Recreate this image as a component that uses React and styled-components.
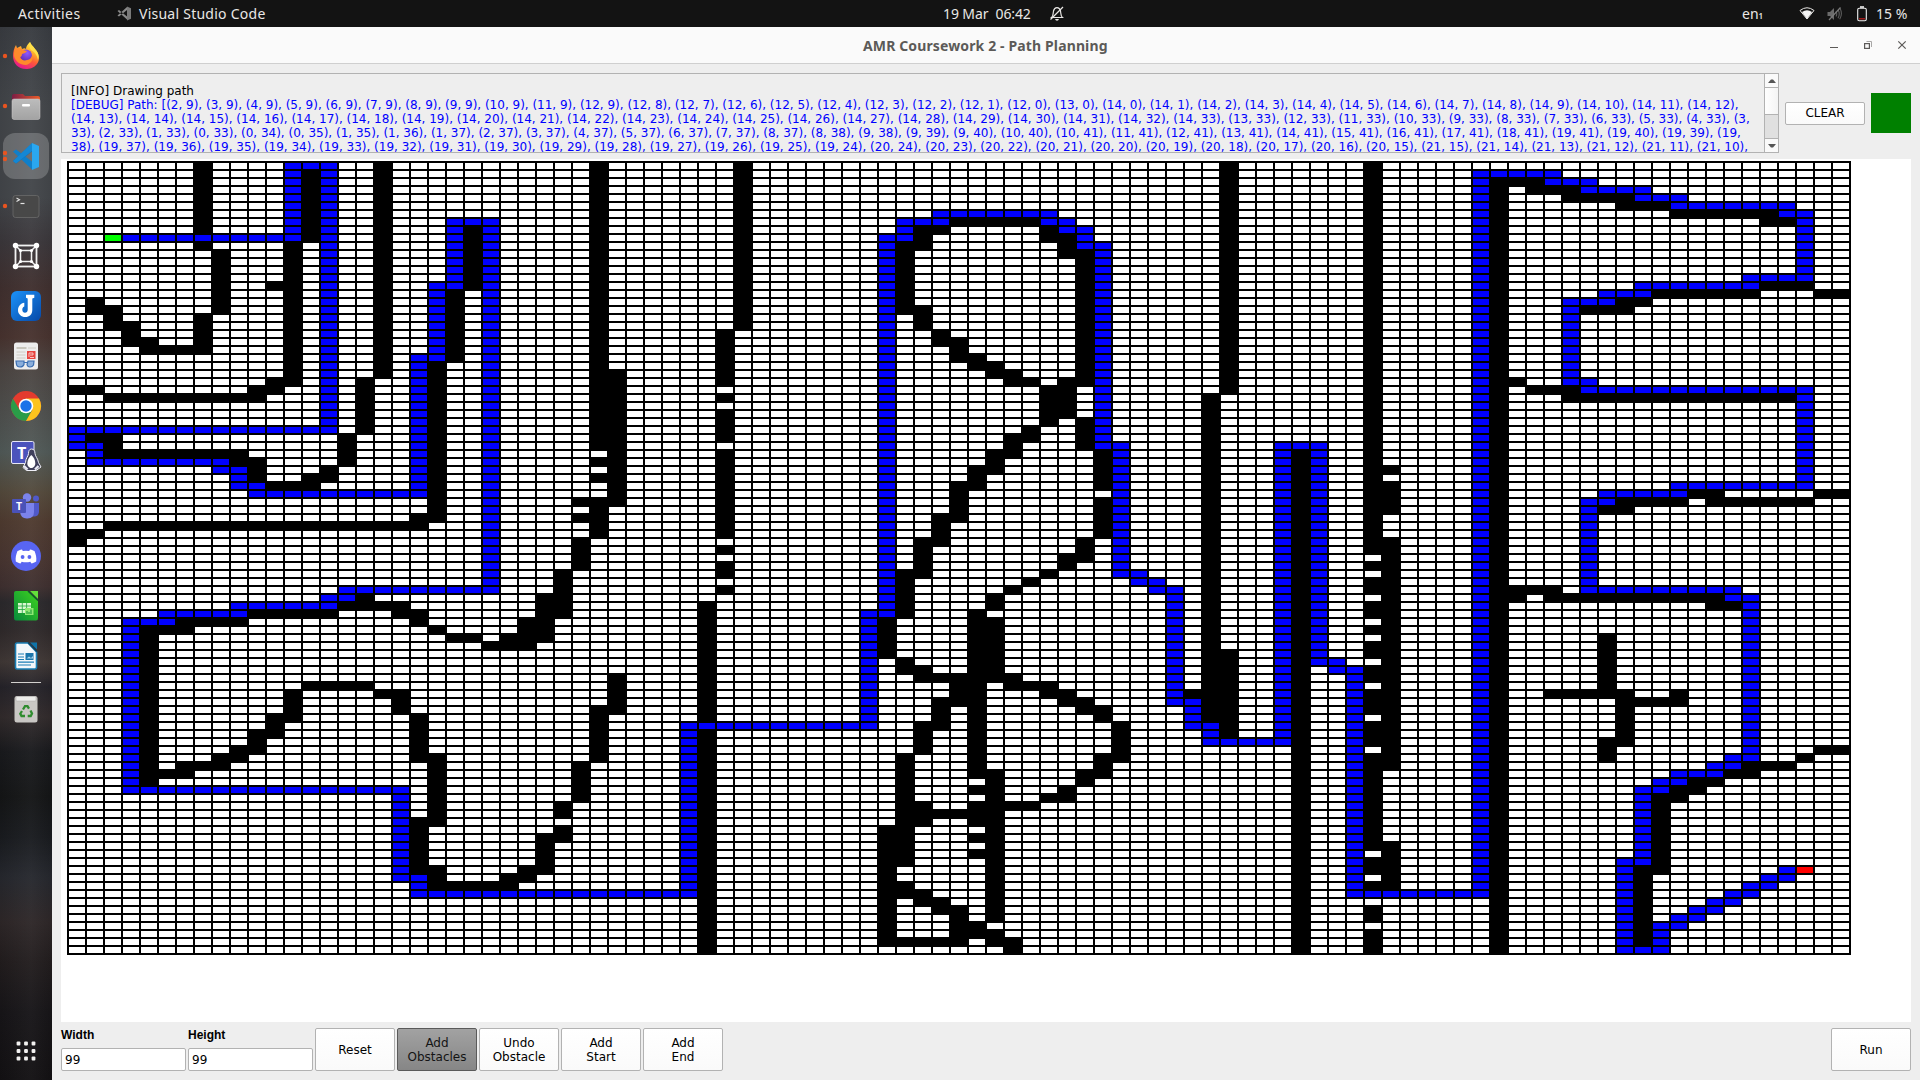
import React from "react";
import styled, { createGlobalStyle } from "styled-components";

const GlobalStyle = createGlobalStyle`
  * { box-sizing: border-box; }
  html, body { margin: 0; padding: 0; background: #131313; }
  body { width: 1920px; height: 1080px; overflow: hidden; }
`;

const uiFont = `"Noto Sans", "Open Sans", sans-serif`;
const appFont = `"DejaVu Sans", sans-serif`;

/* ---------- grid data ---------- */

const COLS = 99;
const ROWS = 99;

const WAYPOINTS = [
  [2, 9], [12, 9], [12, 0], [14, 0], [14, 33], [0, 33], [0, 35], [1, 35], [1, 37], [8, 37], [8, 38],
  [9, 38], [9, 40], [10, 40], [10, 41], [19, 41], [19, 24], [20, 24], [20, 15], [21, 15], [21, 7],
  [23, 7], [23, 53], [15, 53], [15, 54], [14, 54], [14, 55], [9, 55], [9, 56], [5, 56], [5, 57],
  [3, 57], [3, 78], [18, 78], [18, 89], [19, 89], [19, 91], [34, 91], [34, 70], [44, 70], [44, 56],
  [45, 56], [45, 9], [46, 9], [46, 7], [48, 7], [48, 6], [54, 6], [54, 7], [55, 7], [55, 8], [56, 8],
  [56, 10], [57, 10], [57, 35], [58, 35], [58, 51], [59, 51], [59, 52], [60, 52], [60, 53], [61, 53],
  [61, 67], [62, 67], [62, 70], [63, 70], [63, 72], [67, 72], [67, 35], [69, 35], [69, 62], [70, 62],
  [70, 63], [71, 63], [71, 91], [78, 91], [78, 1], [82, 1], [82, 2], [84, 2], [84, 3], [87, 3],
  [87, 4], [89, 4], [89, 5], [95, 5], [95, 6], [96, 6], [96, 14], [93, 14], [93, 15], [87, 15],
  [87, 16], [85, 16], [85, 17], [83, 17], [83, 27], [84, 27], [84, 28], [96, 28], [96, 40], [89, 40],
  [89, 41], [85, 41], [85, 42], [84, 42], [84, 53], [92, 53], [92, 54], [93, 54], [93, 74], [92, 74],
  [92, 75], [91, 75], [91, 76], [89, 76], [89, 77], [88, 77], [88, 78], [87, 78], [87, 87], [86, 87],
  [86, 98], [88, 98], [88, 95], [89, 95], [89, 94], [90, 94], [90, 93], [91, 93], [91, 92], [92, 92],
  [92, 91], [93, 91], [93, 90], [94, 90], [94, 89], [95, 89], [95, 88], [96, 88],
];

/* column: list of [first row, last row] */
const WALLS = {
  0: [[28, 28], [46, 47]],
  1: [[17, 18], [28, 28], [34, 34], [46, 46]],
  2: [[18, 20], [29, 29], [34, 36], [45, 45]],
  3: [[20, 22], [29, 29], [36, 36], [45, 45]],
  4: [[22, 23], [29, 29], [36, 36], [45, 45], [58, 77]],
  5: [[23, 23], [29, 29], [36, 36], [45, 45], [58, 58], [76, 76]],
  6: [[23, 23], [29, 29], [36, 36], [45, 45], [57, 58], [75, 76]],
  7: [[0, 10], [19, 23], [29, 29], [36, 36], [45, 45], [57, 57], [75, 75]],
  8: [[11, 18], [29, 29], [36, 36], [45, 45], [57, 57], [74, 75]],
  9: [[29, 29], [36, 37], [45, 45], [57, 57], [73, 74]],
  10: [[28, 29], [37, 39], [45, 45], [56, 56], [71, 73]],
  11: [[15, 15], [27, 28], [40, 40], [45, 45], [56, 56], [69, 71]],
  12: [[10, 27], [40, 40], [45, 45], [56, 56], [66, 69]],
  13: [[1, 9], [39, 40], [45, 45], [56, 56], [65, 65]],
  14: [[38, 39], [45, 45], [56, 56], [65, 65]],
  15: [[34, 37], [45, 45], [55, 55], [65, 65]],
  16: [[27, 33], [45, 45], [54, 55], [65, 65]],
  17: [[0, 26], [45, 45], [55, 55], [66, 66]],
  18: [[45, 45], [55, 56], [66, 68]],
  19: [[44, 45], [56, 57], [69, 74], [82, 88]],
  20: [[25, 44], [58, 58], [74, 82], [88, 90]],
  21: [[16, 24], [59, 59], [90, 90]],
  22: [[8, 15], [59, 59], [90, 90]],
  23: [[60, 60], [90, 90]],
  24: [[59, 60], [89, 90]],
  25: [[57, 60], [88, 89]],
  26: [[54, 59], [84, 88]],
  27: [[51, 56], [80, 81], [83, 84]],
  28: [[42, 42], [44, 44], [47, 50], [75, 79]],
  29: [[0, 35], [37, 37], [39, 39], [42, 46], [68, 74]],
  30: [[26, 42], [64, 68]],
  35: [[55, 98]],
  36: [[21, 27], [29, 29], [31, 34], [36, 46], [48, 48], [50, 51], [53, 53]],
  37: [[0, 20]],
  45: [[57, 61], [83, 97]],
  46: [[10, 18], [51, 56], [62, 63], [74, 87], [90, 91], [97, 97]],
  47: [[8, 10], [18, 20], [47, 51], [63, 64], [70, 73], [80, 82], [91, 92], [97, 97]],
  48: [[8, 8], [21, 22], [44, 47], [64, 64], [67, 70], [81, 81], [92, 93], [97, 97]],
  49: [[7, 7], [22, 24], [40, 44], [64, 67], [81, 81], [93, 97]],
  50: [[7, 7], [24, 25], [38, 40], [56, 76], [78, 78], [80, 82], [84, 84], [86, 86], [95, 96]],
  51: [[7, 7], [25, 26], [36, 38], [54, 55], [57, 64], [76, 94], [96, 97]],
  52: [[7, 7], [26, 27], [34, 36], [53, 53], [64, 65], [80, 80], [97, 98]],
  53: [[7, 7], [27, 27], [33, 34], [52, 52], [65, 65], [80, 80]],
  54: [[8, 9], [28, 32], [51, 51], [65, 66], [79, 79]],
  55: [[9, 11], [27, 31], [49, 50], [66, 67], [78, 79]],
  56: [[11, 27], [32, 35], [47, 49], [67, 68], [76, 77]],
  57: [[36, 40], [42, 46], [68, 69], [74, 76]],
  58: [[70, 74]],
  62: [[66, 66]],
  63: [[29, 69]],
  64: [[0, 28], [61, 71]],
  68: [[36, 98]],
  72: [[0, 48], [50, 50], [52, 53], [55, 56], [58, 58], [60, 61], [63, 64], [66, 68], [70, 72],
    [74, 85], [87, 88], [90, 90], [93, 94], [96, 98]],
  73: [[38, 38], [40, 43], [47, 75], [85, 90]],
  79: [[2, 98]],
  80: [[2, 2], [27, 27], [53, 54]],
  81: [[2, 3], [28, 28], [53, 53]],
  82: [[3, 3], [28, 28], [53, 54], [66, 66]],
  83: [[3, 4], [28, 29], [54, 54], [66, 66]],
  84: [[4, 4], [18, 18], [29, 29], [54, 54], [66, 66]],
  85: [[4, 4], [18, 18], [29, 29], [43, 43], [54, 54], [59, 66], [72, 74]],
  86: [[4, 5], [17, 18], [29, 29], [42, 43], [54, 54], [66, 72]],
  87: [[5, 5], [17, 17], [29, 29], [42, 42], [54, 54], [67, 67], [88, 97]],
  88: [[5, 5], [16, 16], [29, 29], [42, 42], [54, 54], [67, 67], [79, 88]],
  89: [[6, 6], [16, 16], [29, 29], [42, 42], [54, 54], [66, 67], [78, 79]],
  90: [[6, 6], [16, 16], [29, 29], [41, 41], [54, 54], [77, 78]],
  91: [[6, 6], [16, 16], [29, 29], [41, 42], [54, 55], [77, 77]],
  92: [[6, 6], [16, 16], [29, 29], [42, 42], [55, 55], [76, 76]],
  93: [[6, 6], [16, 16], [29, 29], [42, 42], [75, 76]],
  94: [[6, 7], [15, 15], [29, 29], [42, 42], [75, 75]],
  95: [[7, 7], [15, 15], [29, 29], [42, 42], [75, 75]],
  96: [[15, 15], [42, 42], [74, 74]],
  97: [[16, 16], [41, 41], [73, 73]],
  98: [[16, 16], [41, 41], [73, 73]],
};

function expandPath(points) {
  const out = [points[0]];
  for (let i = 1; i < points.length; i += 1) {
    let [x, y] = points[i - 1];
    const [tx, ty] = points[i];
    while (x !== tx || y !== ty) {
      x += Math.sign(tx - x);
      y += Math.sign(ty - y);
      out.push([x, y]);
    }
  }
  return out;
}

const PATH = expandPath(WAYPOINTS);
const LOG_PATH = PATH.slice(0, PATH.findIndex(([x, y]) => x === 21 && y === 10) + 1);

const COLOURS = { free: "#ffffff", path: "#0000ff", start: "#00ff00", end: "#ff0000" };
const key = (x, y) => y * COLS + x;

const MARKED = (() => {
  const m = new Map();
  PATH.forEach(([x, y]) => m.set(key(x, y), "path"));
  m.set(key(...PATH[0]), "start");
  m.set(key(...PATH[PATH.length - 1]), "end");
  return m;
})();

/* ---------- styled parts ---------- */

const Desktop = styled.div`
  width: 1920px;
  height: 1080px;
  display: flex;
  flex-direction: column;
  overflow: hidden;
`;

const TopBar = styled.header`
  flex: 0 0 27px;
  display: flex;
  align-items: center;
  background: #131313;
  color: #e9e7e5;
  font: 14px/27px ${uiFont};
  white-space: pre;
`;

const TopSlot = styled.div`
  width: ${(p) => p.$w}px;
  padding-left: ${(p) => p.$pad || 0}px;
  letter-spacing: ${(p) => p.$ls || 0}px;
  height: 27px;
  display: flex;
  align-items: center;
  flex: none;
`;

const Tiny = styled.span`
  font-size: 8px;
  font-weight: 600;
  padding-top: 4px;
`;

const Main = styled.div`
  flex: 1;
  display: flex;
  min-height: 0;
`;

const Dock = styled.nav`
  flex: 0 0 52px;
  display: flex;
  flex-direction: column;
  padding-top: 3px;
  background:
    linear-gradient(90deg, rgba(0, 0, 0, 0.06), rgba(255, 255, 255, 0.03) 60%, rgba(0, 0, 0, 0.05)),
    linear-gradient(180deg, #393c41 0, #43464a 80px, #43464a 170px, #3b373b 215px, #40302f 260px,
      #48332f 310px, #4c4542 340px, #4f504e 385px, #515a58 425px, #544a3c 465px, #4f3b30 495px,
      #483531 535px, #3f3030 560px, #2b292c 575px, #302a2b 605px, #403836 635px, #252329 660px,
      #322b2c 690px, #191a1d 725px, #141516 770px, #191b1f 810px, #26282e 850px, #2e2728 895px,
      #221d1e 935px, #171518 985px, #131113 1053px);
`;

const DockItem = styled.div`
  flex: 0 0 50px;
  svg { display: block; }
`;

const DockRule = styled.hr`
  flex: 0 0 1px;
  width: 30px;
  margin: 2px 11px 1px;
  border: 0;
  background: #d2d0ce;
`;

const DockFooter = styled.div`
  margin-top: auto;
  height: 58px;
  svg { display: block; }
`;

const Window = styled.section`
  flex: 1;
  min-width: 0;
  display: flex;
  flex-direction: column;
  background: #eeeeee;
`;

const TitleBar = styled.div`
  flex: 0 0 37px;
  display: flex;
  align-items: center;
  background: #fafafa;
  border-bottom: 1px solid #cfcfcf;
`;

const Title = styled.h1`
  margin: 0 0 0 811px;
  padding-top: 1px;
  width: 967px;
  font: 700 14px/35px ${uiFont};
  letter-spacing: 0.13px;
  color: #5c5a58;
  white-space: nowrap;
`;

const Body = styled.div`
  flex: 1;
  display: flex;
  flex-direction: column;
  padding: 9px 9px 0;
`;

const LogRow = styled.div`
  flex: 0 0 80px;
  display: flex;
  align-items: center;
  margin-bottom: 6px;
`;

const LogFrame = styled.div`
  width: 1718px;
  height: 80px;
  display: flex;
  border: 1px solid #b2b2b2;
`;

const LogText = styled.div`
  width: 1702px;
  height: 78px;
  overflow: hidden;
  padding: 10px 8px 0 9px;
  font: 12px/14px ${appFont};
  letter-spacing: -0.005px;
  color: #0000ff;
`;

const LogLine = styled.div`
  color: ${(p) => (p.$info ? "#000000" : "#0000ff")};
`;

const Scroll = styled.div`
  width: 14px;
  display: flex;
  flex-direction: column;
  border-left: 1px solid #b2b2b2;
  background: #e0e0e0;
`;

const ScrollEnd = styled.div`
  height: 14px;
  display: flex;
  align-items: center;
  justify-content: center;
  background: #fafafa;
  border-${(p) => (p.$down ? "top" : "bottom")}: 1px solid #b2b2b2;
  margin-top: ${(p) => (p.$down ? "auto" : "0")};
`;

const Thumb = styled.div`
  height: 27px;
  background: linear-gradient(90deg, #ffffff, #f4f4f4);
  border-bottom: 1px solid #b2b2b2;
`;

const Button = styled.button`
  width: 80px;
  height: ${(p) => (p.$short ? 23 : 43)}px;
  padding: 0;
  border: 1px solid ${(p) => (p.$active ? "#5a5a5a" : "#b2b2b2")};
  border-radius: 2px;
  background: ${(p) =>
    p.$active ? "linear-gradient(#a2a2a2, #868686)" : "linear-gradient(#ffffff, #fafafa)"};
  color: ${(p) => (p.$active ? "#141414" : "#000000")};
  font: 12px/14px ${appFont};
  white-space: pre-line;
  text-align: center;
`;

const ClearSlot = styled.div`
  margin: 0 6px;
  display: flex;
`;

const Status = styled.div`
  width: 40px;
  height: 40px;
  background: #008000;
`;

const Canvas = styled.div`
  flex: 0 0 863px;
  padding: 2px 6px;
  background: #ffffff;
`;

const Grid = styled.div`
  width: 1784px;
  display: grid;
  grid-template-columns: repeat(${COLS}, 16px);
  grid-auto-rows: 6px;
  gap: 2px;
  padding: 2px;
  background: #000000;
`;

const Cell = styled.i`
  background: ${(p) => COLOURS[p.$kind]};
  grid-column: ${(p) => p.$col};
`;

const Controls = styled.footer`
  display: flex;
  gap: 2px;
  padding-top: 6px;
`;

const Field = styled.label`
  width: 125px;
  display: flex;
  flex-direction: column;
  font: 700 12px/14px "Liberation Sans", sans-serif;
  color: #000000;
`;

const Input = styled.input`
  width: 125px;
  height: 23px;
  margin-top: 6px;
  padding: 0 3px;
  border: 1px solid #b2b2b2;
  border-radius: 2px;
  background: #ffffff;
  color: #000000;
  font: 12px ${appFont};
`;

const RunSlot = styled.div`
  margin-left: auto;
`;

/* ---------- grid ---------- */

const wallSet = new Set();
Object.entries(WALLS).forEach(([c, runs]) =>
  runs.forEach(([a, b]) => {
    for (let r = a; r <= b; r += 1) wallSet.add(key(Number(c), r));
  })
);

const Board = React.memo(function Board() {
  const cells = [];
  for (let r = 0; r < ROWS; r += 1) {
    for (let c = 0; c < COLS; c += 1) {
      const k = key(c, r);
      const kind = MARKED.get(k) || (wallSet.has(k) ? null : "free");
      if (kind || c === 0) {
        cells.push(<Cell key={k} $kind={kind} $col={c + 1} />);
      }
    }
  }
  return <Grid>{cells}</Grid>;
});

/* ---------- dock icons ---------- */

const Icon = ({ children, h = 50 }) => (
  <svg width="52" height={h} viewBox={`0 0 52 ${h}`}>{children}</svg>
);
const Dot = ({ y = 26 }) => <circle cx="5" cy={y} r="2.2" fill="#e95420" />;

const Firefox = () => (
  <Icon>
    <defs>
      <linearGradient id="ff1" x1="0.8" y1="0.05" x2="0.35" y2="1">
        <stop offset="0" stopColor="#fff44f" />
        <stop offset="0.3" stopColor="#ffb52a" />
        <stop offset="0.6" stopColor="#ff5a36" />
        <stop offset="1" stopColor="#e5178f" />
      </linearGradient>
      <radialGradient id="ff2" cx="0.6" cy="0.3" r="0.8">
        <stop offset="0" stopColor="#9059ff" />
        <stop offset="1" stopColor="#5b2aa8" />
      </radialGradient>
    </defs>
    <Dot />
    <path d="M30 12c1 3 3 4 5 7 5 5 5 11 2 15-3 4-7 5-11 5-8 0-13-6-13-13 0-4 1-8 3-11l1 3 4-2 1 3c2-1 3-1 4 0 0-3 2-5 4-7z" fill="url(#ff1)" />
    <circle cx="26" cy="25.5" r="6" fill="url(#ff2)" />
    <path d="M15 19c3-1 6-1 8 1l4 1c-1 2-3 2-5 3 0 2-1 3-2 3 1 3 4 4 7 3 3 0 5-3 5-5 2 4-1 9-6 10-6 0-11-4-12-9 0-3 0-5 1-7z" fill="#ff8a2b" />
    <path d="M30 12c1 3 3 4 5 7 4 4 4 8 3 11-1-5-3-8-7-10-2-2-2-5-1-8z" fill="#ffe04a" />
  </Icon>
);

const Files = () => (
  <Icon>
    <Dot />
    <defs>
      <linearGradient id="fi1" x1="0" x2="1"><stop offset="0" stopColor="#7c1d45" /><stop offset="1" stopColor="#ea5b28" /></linearGradient>
      <linearGradient id="fi2" x1="0" x2="0" y1="0" y2="1"><stop offset="0" stopColor="#bcbcbc" /><stop offset="1" stopColor="#a3a3a3" /></linearGradient>
    </defs>
    <path d="M14 14h9l2 2h13q2 0 2 2v6H12v-8q0-2 2-2z" fill="url(#fi1)" />
    <path d="M14 19h24q2 0 2 2v16q0 2.500-2 2.500H14q-2 0-2-2.500V21q0-2 2-2z" fill="url(#fi2)" stroke="#d0cfce" strokeWidth="0.5" />
    <rect x="22" y="24" width="8" height="2.500" rx="1" fill="#fff" />
  </Icon>
);

const Code = () => (
  <Icon>
    <rect x="3" y="3" width="46" height="46" rx="12" fill="#ffffff" fillOpacity="0.2" />
    <Dot y={23} />
    <Dot y={29} />
    <path d="M13 21.500l3-2 20 15-4 5z" fill="#0f7fca" />
    <path d="M13 31l3 2.500 20-15-4-5z" fill="#0a6fb8" />
    <path d="M32 13l7 3v21l-7 3z" fill="#2aa7f0" />
    <path d="M13 31l3 2.500 16-12.500v-8z" fill="#1487d4" />
  </Icon>
);

const Terminal = () => (
  <Icon>
    <Dot />
    <rect x="13" y="15.500" width="26" height="22" rx="2.500" fill="#484848" stroke="#6b6b6b" strokeWidth="0.800" />
    <path d="M16.500 18l3 1.700-3 1.700" fill="none" stroke="#e4e4e4" strokeWidth="1.100" />
    <path d="M20.500 23.500h4" stroke="#e4e4e4" strokeWidth="1.200" />
  </Icon>
);

const Boxes = () => (
  <Icon>
    <g fill="none" stroke="#f2f2f2" strokeWidth="1.500">
      <rect x="15.500" y="15.500" width="21" height="21" strokeWidth="1.800" />
      <rect x="20.500" y="20.500" width="11" height="11" />
      <path d="M15.500 15.500l5 5M36.500 15.500l-5 5M15.500 36.500l5-5M36.500 36.500l-5-5" />
    </g>
    <g fill="#fff">
      <circle cx="15.500" cy="15.500" r="2.700" /><circle cx="36.500" cy="15.500" r="2.700" />
      <circle cx="15.500" cy="36.500" r="2.700" /><circle cx="36.500" cy="36.500" r="2.700" />
      <circle cx="20.500" cy="20.500" r="1.600" /><circle cx="31.500" cy="20.500" r="1.600" />
      <circle cx="20.500" cy="31.500" r="1.600" /><circle cx="31.500" cy="31.500" r="1.600" />
    </g>
  </Icon>
);

const Joplin = () => (
  <Icon>
    <defs><linearGradient id="jp" x1="0" y1="0" x2="1" y2="1"><stop offset="0" stopColor="#1c92f8" /><stop offset="1" stopColor="#0749a8" /></linearGradient></defs>
    <rect x="11" y="11" width="30" height="30" rx="6" fill="url(#jp)" />
    <path d="M26 14.800h8.300v3l-2 .7V30c0 4.500-3 7-7 7s-7.300-3-7.300-6.800 2.700-7 6.300-7.500v3.700c-1.700.6-2 2-2 3.300 0 1.800 1.200 3 2.700 3s2.700-1.200 2.700-3V18.500l-1.700-.7z" fill="#fff" />
  </Icon>
);

const Reader = () => (
  <Icon>
    <rect x="14" y="12.500" width="24" height="27" rx="2.500" fill="#ededed" />
    <path d="M16.500 18h10" stroke="#c5c2b8" strokeWidth="1.800" />
    <path d="M16.500 22h9M16.500 25h9M16.500 28h9M28 18h8" stroke="#cfccc4" strokeWidth="1" />
    <rect x="27" y="21" width="8.500" height="8" fill="#e8443f" />
    <path d="M29 27v-4h4v2h-3M30 27.500h4" fill="none" stroke="#fbd0ce" strokeWidth="0.900" />
    <path d="M16 31h8v3.500q-1 2.500-4 2.500t-3.500-2.500zM28 31h6l-.5 4q-1 2-3.500 2t-3-2.500zM24 32.500h4" fill="#8aaedb" stroke="#3c6fb2" strokeWidth="1.200" />
  </Icon>
);

const Chrome = () => (
  <Icon>
    <circle cx="26" cy="26" r="15" fill="#e33b2e" />
    <path d="M13 18.500A15 15 0 0 0 26 41l6.500-11.300H19.500z" fill="#2a9c48" />
    <path d="M26 41A15 15 0 0 0 39 18.500H26l6.500 11.200z" fill="#fcc31e" />
    <circle cx="26" cy="26" r="7.300" fill="#fff" />
    <circle cx="26" cy="26" r="5.700" fill="#1b73e8" />
  </Icon>
);

const Tee = styled.text`
  font: 700 ${(p) => p.$size}px "Open Sans", sans-serif;
  fill: #ffffff;
`;

const TeamsLinux = () => (
  <Icon>
    <rect x="11.500" y="11.500" width="22.500" height="22" rx="1.500" fill="#4b53bc" stroke="#e6e6f6" strokeWidth="1" />
    <Tee x="17" y="28.500" $size="16">T</Tee>
    <path d="M31.500 19c2.500 0 3.500 2 3.500 4.500 0 2.500 3 5 3.500 9l2.500 4.500-5 3.500h-9.500l-3.500-3 2.500-5c0-4 3-6.500 3-9 0-2.500.8-4.500 3-4.500z" fill="#40405c" stroke="#f0f0f8" strokeWidth="1" />
    <path d="M31.300 25c2.500 2 4 5 4 8.500 0 2-1.500 4.500-4 4.500s-4-2.500-4-4.500c0-3.500 1.800-6.500 4-8.500z" fill="#fff" />
    <path d="M24 36l3.500 3.500M38.500 36l-3.500 3.500" stroke="#e8e8f2" strokeWidth="2.400" />
  </Icon>
);

const Teams = () => (
  <Icon>
    <circle cx="36" cy="18.500" r="3" fill="#5059c9" />
    <path d="M30 23h9v9q-.5 4-4 4.500h-4z" fill="#5059c9" />
    <circle cx="27" cy="17.500" r="4.200" fill="#7b83eb" />
    <path d="M20 23h14v9q0 6-6.500 6.500T20 32z" fill="#7b83eb" />
    <rect x="12" y="19" width="14" height="14" rx="1" fill="#4a52b8" />
    <Tee x="16" y="30" $size="10.500">T</Tee>
  </Icon>
);

const Discord = () => (
  <Icon>
    <circle cx="26" cy="26" r="15" fill="#5865f2" />
    <path d="M22 19.500c-2 .3-3.500 1-4.500 1.600-1.300 3-2.300 7-1.700 10.400 1.800 1.200 3.500 1.800 4.700 2l1.200-1.800q4.300 1.200 8.600 0l1.200 1.800c1.200-.2 3-.8 4.700-2 .6-3.400-.4-7.400-1.700-10.400-1-.6-2.500-1.300-4.500-1.600l-.8 1.500q-3.200-.5-6.400 0z" fill="#fff" />
    <circle cx="22.600" cy="27" r="1.900" fill="#5865f2" /><circle cx="29.400" cy="27" r="1.900" fill="#5865f2" />
  </Icon>
);

const Calc = () => (
  <Icon>
    <defs><linearGradient id="ca" x1="1" y1="0" x2="0" y2="1"><stop offset="0" stopColor="#3fd41e" /><stop offset="1" stopColor="#078a3c" /></linearGradient></defs>
    <path d="M16 11h12l10 10v17q0 2.500-2 2.500H16q-2 0-2-2.500V13q0-2 2-2z" fill="url(#ca)" />
    <path d="M30 11h8v8z" fill="#63e03a" />
    <path d="M28 11l10 9.500" stroke="#10602a" strokeWidth="1.500" />
    <rect x="18" y="23" width="13" height="10" fill="#d9f7cf" />
    <path d="M18 26h13M18 29.500h13M22.300 23v10M26.600 23v10" stroke="#1ea63d" strokeWidth="0.800" />
    <rect x="25" y="28" width="8.500" height="7" fill="#8fe873" />
    <path d="M27 34v-3M29 34v-2M31 34v-4.500" stroke="#1a9c3a" strokeWidth="1.100" />
  </Icon>
);

const Writer = () => (
  <Icon>
    <path d="M17 13h11l8.500 9v15q0 2-1.500 2H17q-1.500 0-1.500-2V15q0-2 1.500-2z" fill="#f3f7fa" stroke="#1a7fb5" strokeWidth="1.600" />
    <path d="M30 12.500h7v7z" fill="#0f74aa" />
    <path d="M28 12.500l9 9" stroke="#0d3f5c" strokeWidth="1.300" />
    <path d="M18 24h6M18 27h6M18 29.500h6M18 32.200h16M18 35h13" stroke="#1c7fb6" strokeWidth="1.200" />
    <rect x="25.500" y="23" width="8" height="7" fill="#1b75ab" />
    <path d="M26.500 28.500l2.500-2 2 1.500 2-2v2.500z" fill="#a7d3ea" />
  </Icon>
);

const Trash = () => (
  <Icon>
    <rect x="14.500" y="12" width="23" height="26.500" rx="2.500" fill="#c9c7c4" />
    <rect x="16" y="12.500" width="20" height="4.500" rx="1" fill="#ececea" stroke="#a9a7a4" strokeWidth="0.500" />
    <g fill="none" stroke="#2f8c2f" strokeWidth="2.300">
      <path d="M23 25.500l2-3.300h2.500l1.500 2.500" />
      <path d="M30.500 26.500l1.500 3-1.300 2.500h-3" />
      <path d="M25 32h-3.500l-1.200-2.300 1.700-2.700" />
    </g>
  </Icon>
);

const AppsGrid = () => (
  <Icon h={58}>
    {[21.5, 29, 36.5].map((y) => [18.5, 26, 33.5].map((x) => (
      <rect key={`${x}-${y}`} x={x - 1.900} y={y - 1.900} width="3.800" height="3.800" rx="1" fill="#f2f1f0" />
    )))}
  </Icon>
);

const DOCK = [Firefox, Files, Code, Terminal, Boxes, Joplin, Reader, Chrome, TeamsLinux, Teams, Discord, Calc, Writer];

/* ---------- small glyphs ---------- */

const CodeMark = () => (
  <svg width="15" height="15" viewBox="0 0 15 15">
    <path d="M0.500 5l1.500-1 8 6.500v3zM0.500 9.500l1.500 1 8-6.500V1z" fill="#8a8a8a" />
    <path d="M10 0.500l4 1.700v10.600l-4 1.700z" fill="#7a7a7a" />
  </svg>
);

const Bell = () => (
  <svg width="14" height="15" viewBox="0 0 14 15">
    <path d="M1.500 11.500c2-1.500 1.500-4 2-6.500.5-2.200 1.700-3.400 3.500-3.400s3 1.200 3.500 3.400c.5 2.500 0 5 2 6.500z" fill="none" stroke="#e9e7e5" strokeWidth="1.200" />
    <path d="M5 13h4q-.5 1.700-2 1.700T5 13z" fill="#e9e7e5" />
    <path d="M0.500 13.500L13 1" stroke="#e9e7e5" strokeWidth="1.200" />
  </svg>
);

const Wifi = () => (
  <svg width="16" height="13" viewBox="0 0 16 13">
    <path d="M1 3.500Q8-2 15 3.500L8 12z" fill="none" stroke="#e9e7e5" strokeWidth="1" />
    <path d="M3 5q5-3.300 10 0L8 12z" fill="#f4f4f4" />
  </svg>
);

const Mute = () => (
  <svg width="15" height="14" viewBox="0 0 15 14">
    <path d="M0.500 5h2.500l4-4v12l-4-4H0.500z" fill="#6a6a6a" />
    <path d="M9 4.500q1.500 2.500 0 5M11 2.800q2.500 4 0 8.400M13 1.200q3 5.800-.3 11" fill="none" stroke="#5c5c5c" strokeWidth="1.100" />
    <path d="M2 13L13.500 0.500" stroke="#7a7a7a" strokeWidth="1.200" />
  </svg>
);

const Battery = () => (
  <svg width="10" height="16" viewBox="0 0 10 16">
    <rect x="0.700" y="2.200" width="8.600" height="12.600" rx="1.500" fill="none" stroke="#f0f0f0" strokeWidth="1.100" />
    <path d="M3 1h4" stroke="#f0f0f0" strokeWidth="1.600" />
    <path d="M2 12.800h6" stroke="#c01c1c" strokeWidth="1.200" />
  </svg>
);

const WindowControls = () => (
  <svg width="80" height="12" viewBox="0 0 80 12">
    <path d="M0 8.500h8" stroke="#5c5a58" strokeWidth="1" />
    <rect x="34.600" y="4.600" width="4.800" height="4.800" fill="none" stroke="#5c5a58" strokeWidth="1.200" />
    <path d="M36.500 2.500h5v5.500" fill="none" stroke="#a8a7a6" strokeWidth="1" />
    <path d="M68.300 2.300l7.400 7.400M75.700 2.300L68.300 9.700" stroke="#5c5a58" strokeWidth="1.200" />
  </svg>
);

const Arrow = ({ down }) => (
  <svg width="8" height="4" viewBox="0 0 8 4">
    <path d={down ? "M0 0h8L5 3.600H3z" : "M0 4h8L5 .4H3z"} fill="#555" />
  </svg>
);

/* ---------- page ---------- */

export default function App() {
  const logText = `[DEBUG] Path: [${LOG_PATH.map(([x, y]) => `(${x}, ${y})`).join(", ")},`;
  return (
    <>
      <GlobalStyle />
      <Desktop>
        <TopBar>
          <TopSlot $w={117} $pad={18} $ls={0.42}>Activities</TopSlot>
          <TopSlot $w={22}><CodeMark /></TopSlot>
          <TopSlot $w={804} $ls={0.25}>Visual Studio Code</TopSlot>
          <TopSlot $w={107} $ls={-0.1}>{"19 Mar  06:42"}</TopSlot>
          <TopSlot $w={692}><Bell /></TopSlot>
          <TopSlot $w={57}>en<Tiny>1</Tiny></TopSlot>
          <TopSlot $w={28}><Wifi /></TopSlot>
          <TopSlot $w={30}><Mute /></TopSlot>
          <TopSlot $w={19}><Battery /></TopSlot>
          <TopSlot $w={42}>15 %</TopSlot>
        </TopBar>
        <Main>
          <Dock>
            {DOCK.map((I, i) => <DockItem key={i}><I /></DockItem>)}
            <DockRule />
            <DockItem><Trash /></DockItem>
            <DockFooter><AppsGrid /></DockFooter>
          </Dock>
          <Window>
            <TitleBar>
              <Title>AMR Coursework 2 - Path Planning</Title>
              <WindowControls />
            </TitleBar>
            <Body>
              <LogRow>
                <LogFrame>
                  <LogText>
                    <LogLine $info>[INFO] Drawing path</LogLine>
                    <LogLine>{logText}</LogLine>
                  </LogText>
                  <Scroll>
                    <ScrollEnd><Arrow /></ScrollEnd>
                    <Thumb />
                    <ScrollEnd $down><Arrow down /></ScrollEnd>
                  </Scroll>
                </LogFrame>
                <ClearSlot><Button $short>CLEAR</Button></ClearSlot>
                <Status />
              </LogRow>
              <Canvas><Board /></Canvas>
              <Controls>
                <Field>Width<Input defaultValue="99" /></Field>
                <Field>Height<Input defaultValue="99" /></Field>
                <Button>Reset</Button>
                <Button $active>{"Add\nObstacles"}</Button>
                <Button>{"Undo\nObstacle"}</Button>
                <Button>{"Add\nStart"}</Button>
                <Button>{"Add\nEnd"}</Button>
                <RunSlot><Button>Run</Button></RunSlot>
              </Controls>
            </Body>
          </Window>
        </Main>
      </Desktop>
    </>
  );
}
